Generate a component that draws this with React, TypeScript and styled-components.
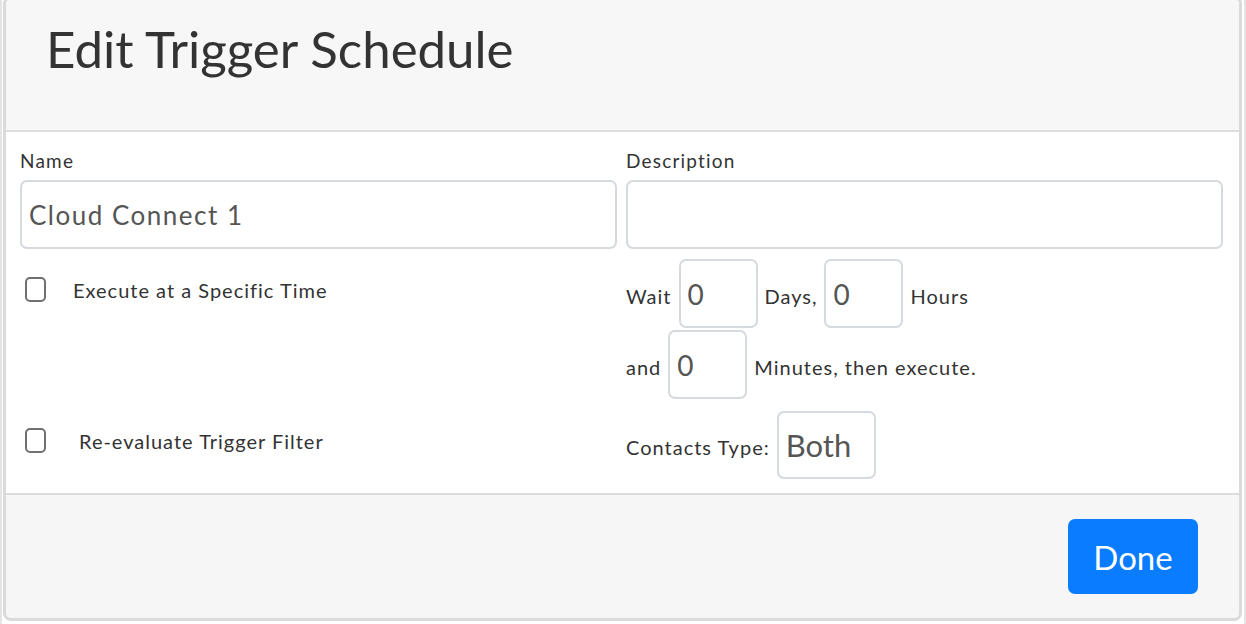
import React from "react";
import styled, { createGlobalStyle } from "styled-components";

const Global = createGlobalStyle`
  html, body { margin: 0; padding: 0; background: #ffffff; }
  body { font-family: Lato, "Noto Sans", sans-serif; color: #333; }
  * { box-sizing: border-box; }
`;

const Frame = styled.div`
  width: 1246px;
  height: 624px;
  overflow: hidden;
  border-left: 2px solid #e4e4e4;
  border-right: 2px solid #e4e4e4;
  padding: 0 2px 0 1px;
`;

const Modal = styled.div`
  margin-top: -4px;
  border: 3px solid #dadada;
  border-radius: 8px;
  overflow: hidden;
  display: flex;
  flex-direction: column;
`;

const Header = styled.div`
  height: 133px;
  background: #f7f7f7;
  border-bottom: 2px solid #dedede;
  padding: 20px 0 0 40px;
`;

const Title = styled.h1`
  margin: 0;
  font-size: 51px;
  font-weight: 400;
  line-height: 60px;
  color: #333;
`;

const Body = styled.div`
  background: #fff;
  height: 361px;
  padding: 17px 15px 0 14px;
`;

const FieldGrid = styled.div`
  display: grid;
  grid-template-columns: 597px 597px;
  column-gap: 9px;
`;

const Field = styled.div`
  display: flex;
  flex-direction: column;
`;

const Label = styled.label`
  font-size: 19px;
  line-height: 24px;
  letter-spacing: 1.2px;
  color: #333;
  margin-bottom: 7px;
`;

const TextBox = styled.div<{ $w?: number; $h?: number; $size?: number; $spacing?: number }>`
  width: ${(p) => (p.$w ? `${p.$w}px` : "100%")};
  height: ${(p) => p.$h ?? 69}px;
  border: 2px solid #d6dade;
  border-radius: 7px;
  background: #fff;
  display: flex;
  align-items: center;
  padding: 0 7px;
  font-size: ${(p) => p.$size ?? 26}px;
  letter-spacing: ${(p) => p.$spacing ?? 1.5}px;
  color: #555;
  flex-shrink: 0;
`;

const OptionsGrid = styled.div`
  display: grid;
  grid-template-columns: 597px 597px;
  grid-template-rows: 69px 69px 78px;
  column-gap: 9px;
  row-gap: 2px;
  margin-top: 10px;
`;

const CheckRow = styled.div<{ $row: number; $top?: number; $indent: number }>`
  grid-column: 1;
  grid-row: ${(p) => p.$row};
  display: flex;
  align-items: center;
  gap: ${(p) => p.$indent}px;
  padding-left: 5px;
  align-self: ${(p) => (p.$top !== undefined ? "start" : "end")};
  margin-top: ${(p) => p.$top ?? 0}px;
  margin-bottom: ${(p) => (p.$top !== undefined ? 0 : 26)}px;
  font-size: 20px;
  letter-spacing: 1px;
  color: #333;
`;

const CheckBox = styled.span`
  display: inline-block;
  flex-shrink: 0;
  width: 21px;
  height: 25px;
  border: 2px solid #707070;
  border-radius: 5px;
  background: #fff;
`;

const InlineRow = styled.div<{ $row: number; $align?: string }>`
  grid-column: 2;
  grid-row: ${(p) => p.$row};
  align-self: ${(p) => p.$align ?? "stretch"};
  display: flex;
  align-items: center;
  gap: 7px;
  font-size: 20px;
  letter-spacing: 1px;
  color: #333;
`;

const Word = styled.span`
  padding-top: 4px;
`;

const Footer = styled.div`
  height: 125px;
  background: #f6f6f6;
  border-top: 2px solid #dcdcdc;
  display: flex;
  justify-content: flex-end;
  align-items: flex-start;
  padding: 24px 41px 0 0;
`;

const DoneButton = styled.button`
  width: 130px;
  height: 75px;
  border: none;
  border-radius: 7px;
  background: #0a7cff;
  color: #fff;
  font-family: Lato, "Noto Sans", sans-serif;
  font-size: 33px;
  padding: 0;
`;

export default function App() {
  return (
    <>
      <Global />
      <Frame>
        <Modal>
          <Header>
            <Title>Edit Trigger Schedule</Title>
          </Header>
          <Body>
            <FieldGrid>
              <Field>
                <Label>Name</Label>
                <TextBox>Cloud Connect 1</TextBox>
              </Field>
              <Field>
                <Label>Description</Label>
                <TextBox />
              </Field>
            </FieldGrid>
            <OptionsGrid>
              <CheckRow $row={1} $top={18} $indent={27}>
                <CheckBox />
                <span>Execute at a Specific Time</span>
              </CheckRow>
              <CheckRow $row={3} $indent={33}>
                <CheckBox />
                <span>Re-evaluate Trigger Filter</span>
              </CheckRow>
              <InlineRow $row={1}>
                <Word>Wait</Word>
                <TextBox $w={79} $size={28} $spacing={0}>0</TextBox>
                <Word>Days,</Word>
                <TextBox $w={79} $size={28} $spacing={0}>0</TextBox>
                <Word>Hours</Word>
              </InlineRow>
              <InlineRow $row={2}>
                <Word>and</Word>
                <TextBox $w={79} $size={28} $spacing={0}>0</TextBox>
                <Word>Minutes, then execute.</Word>
              </InlineRow>
              <InlineRow $row={3} $align="end">
                <Word>Contacts Type:</Word>
                <TextBox $w={99} $h={68} $size={31} $spacing={0}>Both</TextBox>
              </InlineRow>
            </OptionsGrid>
          </Body>
          <Footer>
            <DoneButton>Done</DoneButton>
          </Footer>
        </Modal>
      </Frame>
    </>
  );
}
